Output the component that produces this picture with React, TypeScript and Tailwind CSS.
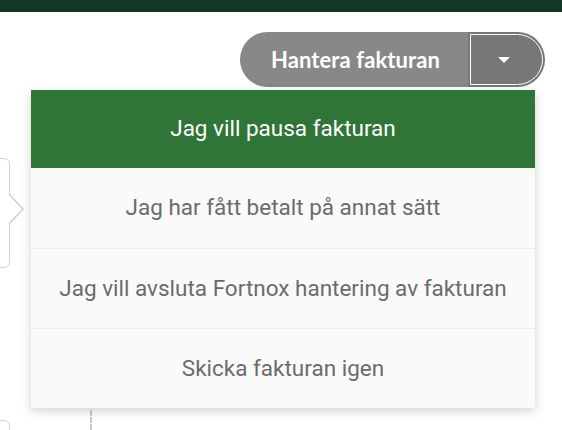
import React from 'react';

const items = [
  'Jag har fått betalt på annat sätt',
  'Jag vill avsluta Fortnox hantering av fakturan',
  'Skicka fakturan igen',
];

const App = () => {
  return (
    <div className="relative w-[562px] h-[430px] overflow-hidden bg-white" style={{ fontFamily: 'Roboto, sans-serif' }}>
      <div className="h-3 bg-[#133823]" />

      {/* background content behind the menu */}
      <div className="absolute left-[-20px] top-[158px] w-[30px] h-[110px] rounded-md border border-[#cfcfcf] bg-white" />
      <svg className="absolute left-[8px] top-[193px]" width="18" height="32" viewBox="0 0 18 32">
        <path d="M1 1 L15 16 L1 31" fill="white" stroke="#cfcfcf" strokeWidth="1.5" />
      </svg>
      <div className="absolute left-[90px] top-[410px] h-[20px] border-l-2 border-dashed border-[#c8c8c8]" />
      <div className="absolute left-[-20px] top-[420px] w-[30px] h-[30px] rounded-md border border-[#cfcfcf]" />

      <div className="flex justify-end pt-5 pr-[17px]">
        <div className="flex h-[55px]">
          <button className="h-full pl-[31px] pr-[28px] rounded-l-full bg-[#888888] text-white text-[22px] font-bold tracking-[0.1px]" style={{ fontFamily: 'Lato, sans-serif' }}>
            Hantera fakturan
          </button>
          <div className="h-full w-[77px] rounded-r-full bg-[#777777] p-[2px]">
            <div className="h-full w-full rounded-r-full border border-white flex items-center justify-center pr-[6px]">
              <svg width="14" height="8" viewBox="0 0 14 8">
                <path d="M1 1 L13 1 L7 7 Z" fill="white" />
              </svg>
            </div>
          </div>
        </div>
      </div>

      <div className="absolute left-[31px] top-[90px] w-[504px] bg-[#fafafa] shadow-[0_3px_10px_rgba(0,0,0,0.18)]">
        <div className="h-[78px] bg-[#2e7537] flex items-center justify-center text-white text-[22.5px]">
          Jag vill pausa fakturan
        </div>
        {items.map((label, i) => (
          <div
            key={i}
            className={`h-[80px] flex items-center justify-center text-[22.5px] text-[#6b6b6b] ${i > 0 ? 'border-t border-[#eeeeee]' : ''}`}
          >
            {label}
          </div>
        ))}
      </div>
    </div>
  );
};

export default App;
